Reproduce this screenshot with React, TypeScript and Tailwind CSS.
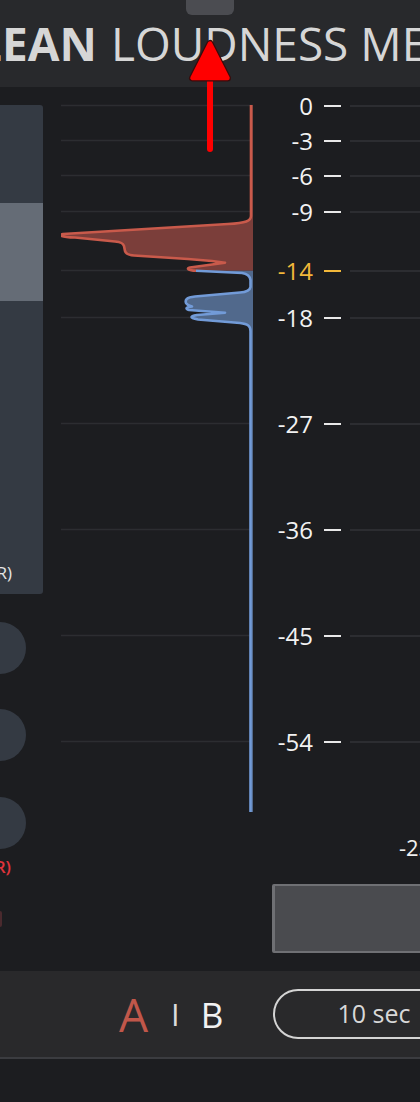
const marks = [
  { label: '0', rowClass: 'mt-[6px]', y: 106 },
  { label: '-3', rowClass: 'mt-[35px]', y: 141 },
  { label: '-6', rowClass: 'mt-[35px]', y: 176 },
  { label: '-9', rowClass: 'mt-[36px]', y: 212 },
  { label: '-14', rowClass: 'mt-[59px]', y: 271, target: true },
  { label: '-18', rowClass: 'mt-[47px]', y: 318 },
  { label: '-27', rowClass: 'mt-[106px]', y: 424 },
  { label: '-36', rowClass: 'mt-[106px]', y: 530 },
  { label: '-45', rowClass: 'mt-[106px]', y: 636 },
  { label: '-54', rowClass: 'mt-[106px]', y: 742 },
]

const redLine =
  'M 251 105 L 251 216 C 251 221 246 223 228 224 L 63 234 C 59 235 60 237 75 237.5 L 115 241.5 C 121 242 123 243 124 246 L 125 251 C 126 254 128 255 134 255.5 L 188 259 L 212 261 L 225 262.7 L 212 264.5 L 190 267.5 C 186 268.5 188 270.5 196 270.8'

const blueLine =
  'M 196 270.8 L 242 273 C 248 274 250 276 250.5 280 L 250.5 287 C 250 290 247 292 240 292.5 L 195 296.5 C 186 297.5 185 300 186 303 C 187 305 190 306 192 306.5 C 186 307 185 309 189 310 L 225 312.7 L 197 315 C 190 316 189 318 198 319.5 L 240 323 C 248 324 250.5 326 250.5 331 L 250.5 812'

const Histogram = () => (
  <svg width={192} height={720} viewBox="61 100 192 720" className="shrink-0">
    {marks.map((m) => (
      <line key={m.label} x1={61} x2={253} y1={m.y - 0.5} y2={m.y - 0.5} stroke="#2c2d31" strokeWidth={1.5} />
    ))}
    <path d={redLine + ' L 253 270.8 L 253 105 Z'} fill="#7b3e3a" />
    <path d={blueLine + ' L 253 812 L 253 270.8 Z'} fill="#51698c" />
    <path d={redLine} fill="none" stroke="#c95a4b" strokeWidth={2.6} strokeLinejoin="round" />
    <path d={blueLine} fill="none" stroke="#729bd8" strokeWidth={2.6} strokeLinejoin="round" />
  </svg>
)

// red annotation arrow drawn over the header
const Arrow = () => (
  <svg width={420} height={160} className="absolute left-0 top-0 pointer-events-none">
    <line x1={210} y1={82} x2={210} y2={149} stroke="#ff0000" strokeWidth={6} strokeLinecap="round" />
    <polygon points="210,43.5 192.5,78 227.5,78" fill="none" stroke="#3a0a0a" strokeWidth={7} strokeLinejoin="round" />
    <polygon points="210,43.5 192.5,78 227.5,78" fill="#ff0000" stroke="#ff0000" strokeWidth={4.5} strokeLinejoin="round" />
  </svg>
)

export default function App() {
  return (
    <div className="relative w-[420px] h-[1102px] overflow-hidden bg-[#1c1d20] font-['Open_Sans',sans-serif]">
      {/* header */}
      <div className="h-[87px] bg-[#28292c] flex flex-col">
        <div className="mx-auto w-[48px] h-[15px] bg-[#4b4c51] rounded-b-[6px]" />
        <div className="mt-[5px] flex whitespace-nowrap text-[46px] leading-[46px] text-[#d6d6d6]">
          <div className="w-[97px] shrink-0 flex justify-end">
            <span className="font-bold">YOULEAN</span>
          </div>
          <span className="ml-[14px]">LOUDNESS METER</span>
        </div>
      </div>

      {/* main */}
      <div className="h-[884px] flex pt-[13px]">
        <div className="w-[43px] shrink-0 flex flex-col">
          <div className="mt-[5px] h-[489px] bg-[#343a43] rounded-r-[3px] flex flex-col">
            <div className="h-[98px]" />
            <div className="h-[98px] bg-[#656c76]" />
            <div className="flex-1 flex flex-col justify-end pb-[13px]">
              <div className="w-[12px] flex justify-end whitespace-nowrap text-[17px] leading-[17px] font-medium text-[#e6e6e6]">
                SHORT TERM (L+R)
              </div>
            </div>
          </div>
          <div className="mt-[28px] -ml-[26px] w-[52px] h-[52px] rounded-full bg-[#343a43] shrink-0" />
          <div className="mt-[35px] -ml-[26px] w-[52px] h-[52px] rounded-full bg-[#343a43] shrink-0" />
          <div className="mt-[36px] -ml-[26px] w-[52px] h-[52px] rounded-full bg-[#343a43] shrink-0" />
          <div className="mt-[9px] w-[11px] flex justify-end whitespace-nowrap text-[17px] leading-[17px] font-semibold text-[#e0343c]">
            (L+R)
          </div>
          <div className="mt-[36px] w-[2px] h-[16px] bg-[#4a2a2e] rounded-r-[2px]" />
        </div>

        <div className="ml-[18px]">
          <Histogram />
        </div>

        <div className="w-[167px] shrink-0 flex flex-col">
          {marks.map((m) => (
            <div key={m.label} className={`h-0 flex items-center ${m.rowClass}`}>
              <span
                className={`w-[60px] shrink-0 text-right text-[24px] leading-[24px] font-medium ${
                  m.target ? 'text-[#f2b83a]' : 'text-[#f2f2f2]'
                }`}
              >
                {m.label}
              </span>
              <div className={`ml-[11px] w-[17px] h-[2px] shrink-0 ${m.target ? 'bg-[#f2b83a]' : 'bg-[#e8e8e8]'}`} />
              <div className="ml-[9px] flex-1 h-[1.5px] bg-[#2c2d31]" />
            </div>
          ))}
          <div className="mt-[94px] ml-[146px] whitespace-nowrap text-[22px] leading-[22px] text-[#efefef]">-23</div>
          <div className="mt-[26px] ml-[19px] w-[200px] h-[69px] shrink-0 bg-[#4a4b4f] border-2 border-l-[3px] border-[#6f7074] rounded-[2px]" />
        </div>
      </div>

      {/* bottom bar */}
      <div className="h-[88px] bg-[#29292b] border-b-2 border-[#3b3c40] flex items-center pl-[119px] whitespace-nowrap">
        <span className="text-[46px] leading-[46px] text-[#c0574a]">A</span>
        <span className="ml-[23px] text-[31px] leading-[31px] text-[#dcdcdc]">I</span>
        <span className="ml-[21px] text-[35px] leading-[35px] text-[#f2f2f2]">B</span>
        <div className="ml-[50px] w-[220px] h-[50px] shrink-0 border-[2.5px] border-[#d4d4d4] rounded-full flex items-center pl-[62px] text-[25px] text-[#d8d8d8]">
          10 sec
        </div>
      </div>

      <Arrow />
    </div>
  )
}
